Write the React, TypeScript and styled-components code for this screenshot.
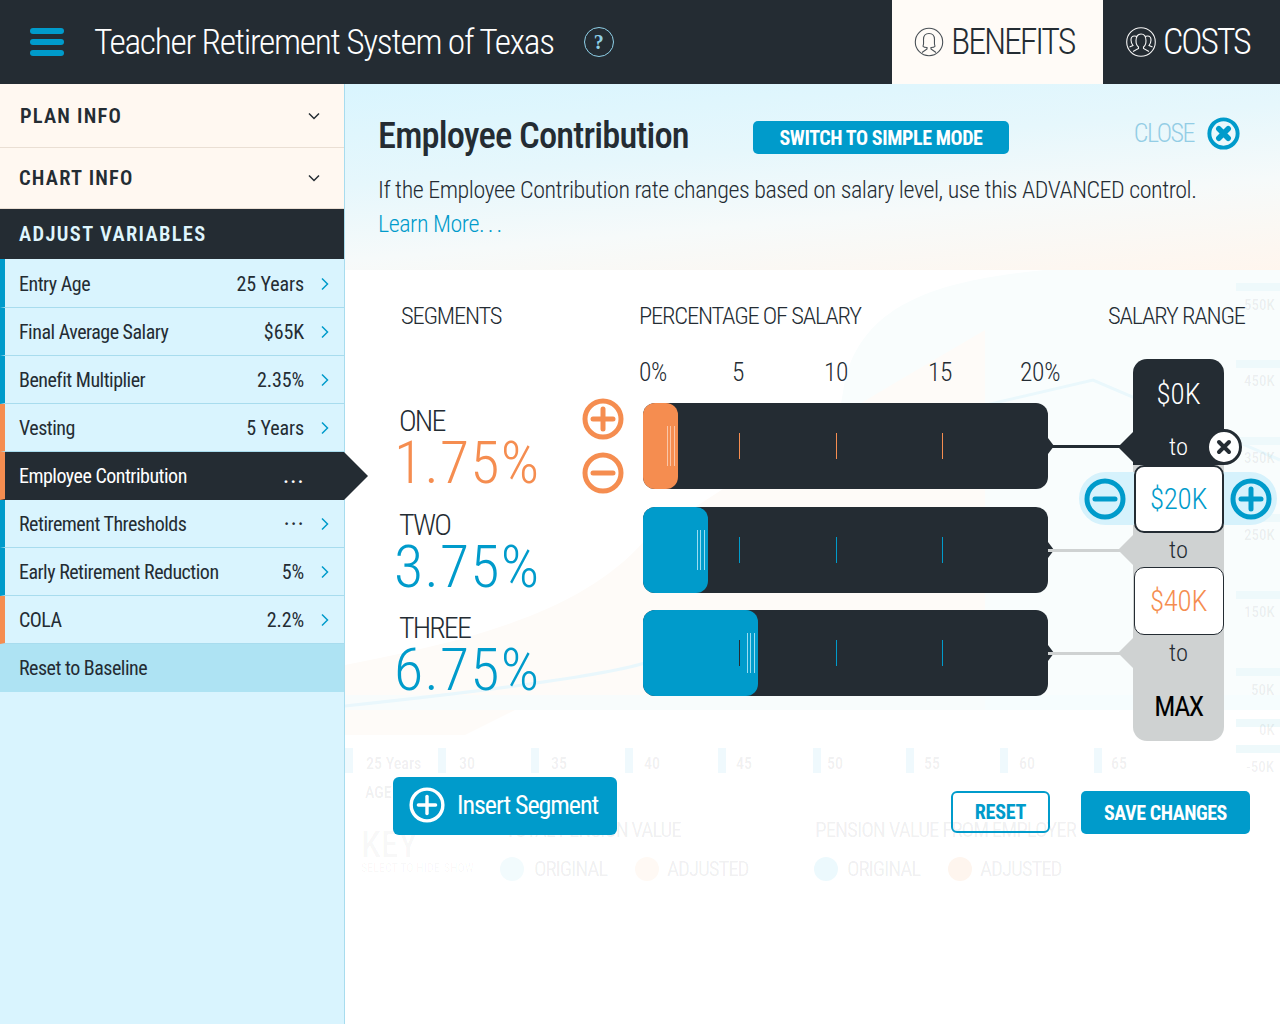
import React from "react";
import styled, { createGlobalStyle, css } from "styled-components";

const DARK = "#242c33";
const BLUE = "#009bcb";
const ORANGE = "#f58d50";
const SKY = "#d9f4fe";
const CREAM = "#fff8f1";
const LINE = "#a8dcee";
const GREY = "#cfd2d2";

const cond = css`
  font-family: "Roboto", "Liberation Sans", sans-serif;
  font-stretch: 75%;
  white-space: nowrap;
`;

const Global = createGlobalStyle`
  html, body { margin: 0; padding: 0; background: #fff; }
  * { box-sizing: border-box; }
`;

const Page = styled.div`
  width: 1280px;
  height: 1024px;
  overflow: hidden;
  display: flex;
  flex-direction: column;
  ${cond}
`;

/* ---------- top bar ---------- */
const TopBar = styled.header`
  height: 84px;
  flex: none;
  background: ${DARK};
  display: flex;
  align-items: center;
  padding-left: 30px;
`;
const Burger = styled.div`
  width: 34px;
  display: flex;
  flex-direction: column;
  gap: 5px;
  margin-right: 30px;
`;
const BurgerBar = styled.span`
  height: 6px;
  border-radius: 3px;
  background: ${BLUE};
`;
const AppTitle = styled.h1`
  margin: 0;
  font-size: 35.5px;
  font-weight: 300;
  letter-spacing: -1.3px;
  color: #fff;
`;
const HelpBadge = styled.span`
  width: 30px;
  height: 30px;
  margin-left: 30px;
  border-radius: 50%;
  border: 1.5px solid #8fd0e8;
  color: #8fd0e8;
  display: flex;
  align-items: center;
  justify-content: center;
  font-family: "Liberation Serif", serif;
  font-weight: 700;
  font-size: 20px;
`;
const Tabs = styled.nav`
  margin-left: auto;
  display: flex;
  align-self: stretch;
`;
const Tab = styled.div<{ $active?: boolean; $w: number; $pad: number }>`
  width: ${(p) => p.$w}px;
  padding-left: ${(p) => p.$pad}px;
  display: flex;
  align-items: center;
  gap: 7px;
  background: ${(p) => (p.$active ? "#fffbf7" : DARK)};
  color: ${(p) => (p.$active ? DARK : "#fff")};
  font-size: 36px;
  font-weight: 300;
  letter-spacing: -2.15px;
`;

/* ---------- layout ---------- */
const Body = styled.div`
  flex: 1;
  display: flex;
  min-height: 0;
`;
const Sidebar = styled.aside`
  position: relative;
  z-index: 2;
  width: 345px;
  flex: none;
  background: ${SKY};
  border-right: 1px solid ${LINE};
`;
const Accordion = styled.div<{ $h: number; $pad: number }>`
  height: ${(p) => p.$h}px;
  padding: 0 23px 0 ${(p) => p.$pad}px;
  background: ${CREAM};
  border-bottom: 1px solid #eadfd4;
  display: flex;
  align-items: center;
  justify-content: space-between;
  color: ${DARK};
  font-size: 20.5px;
  font-weight: 600;
  letter-spacing: 1.2px;
`;
const SectionHead = styled.div`
  height: 50px;
  background: ${DARK};
  color: #dff5fd;
  padding-left: 19px;
  display: flex;
  align-items: center;
  font-size: 20.5px;
  font-weight: 600;
  letter-spacing: 1.35px;
`;
const Row = styled.div<{ $strip: string; $active?: boolean }>`
  position: relative;
  height: 48px;
  display: flex;
  align-items: center;
  padding: 0 12px 0 14px;
  border-left: 5px solid ${(p) => p.$strip};
  border-bottom: 1px solid ${(p) => (p.$active ? DARK : LINE)};
  background: ${(p) => (p.$active ? DARK : "transparent")};
  color: ${(p) => (p.$active ? "#fff" : DARK)};
  font-size: 20px;
  font-weight: 400;
  letter-spacing: -0.5px;
  ${SectionHead} + & {
    height: 49px;
    padding-top: 1px;
  }
  ${(p) =>
    p.$active &&
    css`
      &::after {
        content: "";
        position: absolute;
        left: 339px;
        top: 0;
        width: 24px;
        height: 48px;
        background: ${DARK};
        clip-path: polygon(0 0, 100% 50%, 0 100%);
      }
    `}
`;
const RowValue = styled.span`
  margin-left: auto;
  font-weight: 400;
  letter-spacing: -0.1px;
`;
const RowDots = styled.span`
  margin-left: auto;
  font-size: 20px;
  font-weight: 500;
  letter-spacing: 1.7px;
  margin-right: -1px;
`;
const RowChevron = styled.span`
  width: 14px;
  margin-left: 14px;
  display: flex;
  color: ${BLUE};
`;
const ResetRow = styled.div`
  height: 49px;
  margin-top: -1px;
  background: #aee3f3;
  color: ${DARK};
  padding-left: 19px;
  display: flex;
  align-items: center;
  font-size: 20px;
  letter-spacing: -0.5px;
`;

const Main = styled.main`
  position: relative;
  flex: 1;
  min-width: 0;
  background: #fff;
`;

/* ---------- ghost chart that sits behind the overlay ---------- */
const Ghost = styled.div`
  position: absolute;
  inset: 0;
`;
const GhostArt = styled.svg`
  position: absolute;
  left: 0;
  top: 186px;
`;
const GhostLabel = styled.span<{ $x: number; $y: number; $size?: number; $weight?: number; $o?: number; $ls?: number }>`
  position: absolute;
  left: ${(p) => p.$x - 345}px;
  top: ${(p) => p.$y - 84}px;
  transform: translateY(-50%);
  font-size: ${(p) => p.$size || 16}px;
  font-weight: ${(p) => p.$weight || 500};
  letter-spacing: ${(p) => p.$ls || 0}px;
  color: rgba(36, 44, 51, ${(p) => p.$o || 0.09});
`;
const GhostDot = styled.span<{ $x: number; $c: string }>`
  position: absolute;
  left: ${(p) => p.$x - 345}px;
  top: 773px;
  width: 24px;
  height: 24px;
  border-radius: 50%;
  background: ${(p) => p.$c};
`;

/* ---------- intro ---------- */
const Intro = styled.section`
  position: relative;
  height: 186px;
  padding: 33px 0 0 33px;
  background: linear-gradient(175deg, #d9f5fe 0%, #e6f7fc 38%, #f6fafa 66%, #fff6ee 100%);
`;
const IntroTop = styled.div`
  display: flex;
  align-items: center;
  height: 38px;
`;
const IntroTitle = styled.h2`
  margin: -2px 0 0;
  width: 375px;
  font-size: 36.5px;
  font-weight: 500;
  letter-spacing: -0.85px;
  color: ${DARK};
`;
const ModeButton = styled.button`
  ${cond}
  width: 256px;
  height: 33px;
  margin-top: 3px;
  border: 0;
  border-radius: 5px;
  background: ${BLUE};
  color: #fff;
  font-size: 20px;
  font-weight: 700;
  letter-spacing: -0.4px;
  padding: 0;
`;
const CloseWrap = styled.div`
  margin: -6px 40px 0 auto;
  display: flex;
  align-items: center;
  gap: 13px;
  color: #93cde5;
  font-size: 26px;
  font-weight: 300;
  letter-spacing: -1.5px;
`;
const IntroText = styled.p<{ $blue?: boolean }>`
  margin: ${(p) => (p.$blue ? "6px" : "21px")} 0 0;
  font-size: 24px;
  font-weight: 300;
  line-height: 28px;
  letter-spacing: -0.45px;
  color: ${(p) => (p.$blue ? BLUE : DARK)};
`;
const WideDots = styled.span`
  letter-spacing: 3px;
`;

/* ---------- editor grid ---------- */
const Editor = styled.section`
  position: relative;
  display: grid;
  grid-template-columns: 186px 61px 405px 85px 91px;
  grid-template-rows: 56px 44px 104px 103px 131px;
  padding: 33px 0 0 51px;
`;
const ColumnHead = styled.div<{ $col: string; $off: number }>`
  grid-column: ${(p) => p.$col};
  grid-row: 1;
  margin: -1px 0 0 ${(p) => p.$off}px;
  font-size: 24.5px;
  font-weight: 300;
  letter-spacing: -1.2px;
  color: ${DARK};
  line-height: 27px;
`;
const Scale = styled.div`
  grid-column: 3 / 5;
  grid-row: 2;
  position: relative;
  font-size: 25.5px;
  font-weight: 300;
  letter-spacing: -0.3px;
  color: ${DARK};
`;
const ScaleMark = styled.span<{ $x: number }>`
  position: absolute;
  left: ${(p) => p.$x}px;
  top: 0;
  line-height: 26px;
  margin-left: -4px;
`;
const SegmentLabel = styled.div<{ $row: number }>`
  grid-column: 1;
  grid-row: ${(p) => p.$row};
  display: flex;
  flex-direction: column;
  padding-left: 3px;
`;
const SegName = styled.span`
  font-size: 30px;
  font-weight: 300;
  line-height: 34px;
  margin-top: 1px;
  letter-spacing: -1.9px;
  color: ${DARK};
`;
const SegValue = styled.span<{ $c: string }>`
  font-size: 60px;
  font-weight: 300;
  line-height: 48px;
  margin: 1px 0 0 -5px;
  letter-spacing: 1.2px;
  color: ${(p) => p.$c};
`;
const SegActions = styled.div`
  grid-column: 2;
  grid-row: 3;
  display: flex;
  flex-direction: column;
  gap: 12px;
  margin-top: -5px;
`;
const BarCell = styled.div<{ $row: number }>`
  grid-column: 3;
  grid-row: ${(p) => p.$row};
  position: relative;
  height: 86px;
  background: ${DARK};
  border-radius: 12px;
`;
const BarFill = styled.div<{ $w: number; $c: string }>`
  position: absolute;
  left: 0;
  top: 0;
  bottom: 0;
  width: ${(p) => p.$w}px;
  background: ${(p) => p.$c};
  border-radius: 12px;
`;
const Grip = styled.div<{ $c: string }>`
  position: absolute;
  right: 3px;
  top: 23px;
  width: 8px;
  height: 40px;
  border-left: 1px solid ${(p) => p.$c};
  border-right: 1px solid ${(p) => p.$c};
  &::after {
    content: "";
    position: absolute;
    left: 2px;
    top: 0;
    height: 40px;
    width: 1px;
    background: ${(p) => p.$c};
  }
`;
const Tick = styled.span<{ $x: number; $c: string }>`
  position: absolute;
  left: ${(p) => p.$x}px;
  top: 30px;
  width: 1px;
  height: 26px;
  background: ${(p) => p.$c};
`;
const BarNotch = styled.span`
  position: absolute;
  left: 100%;
  top: 35px;
  width: 6px;
  height: 16px;
  background: ${DARK};
  clip-path: polygon(0 0, 100% 50%, 0 100%);
`;
const Connector = styled.span<{ $c: string }>`
  position: absolute;
  left: 100%;
  top: 42px;
  width: 72px;
  height: 3px;
  background: ${(p) => p.$c};
`;

/* ---------- salary range ---------- */
const RangeCol = styled.div`
  grid-column: 5;
  grid-row: 2 / 6;
  position: relative;
  display: flex;
  flex-direction: column;
  align-items: center;
  border-radius: 14px;
  background: linear-gradient(${DARK} 0, ${DARK} 106px, ${GREY} 106px, ${GREY} 100%);
`;
const RangeValue = styled.div<{ $h: number; $c: string; $w?: number; $fs?: number; $ls?: number }>`
  height: ${(p) => p.$h}px;
  display: flex;
  align-items: center;
  justify-content: center;
  font-size: ${(p) => p.$fs || 29}px;
  font-weight: ${(p) => p.$w || 300};
  letter-spacing: ${(p) => p.$ls || 0}px;
  color: ${(p) => p.$c};
`;
const RangeTo = styled.div<{ $h: number; $c: string; $point: string }>`
  position: relative;
  width: 100%;
  height: ${(p) => p.$h}px;
  padding-bottom: 2px;
  display: flex;
  align-items: center;
  justify-content: center;
  font-size: 24.5px;
  font-weight: 300;
  color: ${(p) => p.$c};
  &::before {
    content: "";
    position: absolute;
    right: 100%;
    top: 50%;
    margin-top: -15px;
    width: 15px;
    height: 30px;
    background: ${(p) => p.$point};
    clip-path: polygon(100% 0, 100% 100%, 0 50%);
  }
`;
const RangeBox = styled.div<{ $c: string; $active?: boolean }>`
  position: relative;
  z-index: 1;
  width: 90px;
  height: 68px;
  border-radius: 10px;
  background: #fff;
  border: ${(p) => (p.$active ? 2 : 1)}px solid ${DARK};
  display: flex;
  align-items: center;
  justify-content: center;
  font-size: 29px;
  font-weight: 300;
  letter-spacing: -0.3px;
  color: ${(p) => p.$c};
`;
const RangeSpread = styled.div`
  position: absolute;
  top: 7px;
  left: -54px;
  width: 198px;
  height: 53px;
  border-radius: 27px;
  background: #d6f2fc;
  display: flex;
  align-items: center;
  justify-content: space-between;
  padding: 0 5px;
`;
const RangeStack = styled.div`
  position: relative;
  width: 100%;
  flex: 1;
  display: flex;
  flex-direction: column;
  align-items: center;
`;
const RemoveBadge = styled.span`
  position: absolute;
  left: 73px;
  top: 70px;
  width: 36px;
  height: 36px;
  border-radius: 50%;
  background: #fff;
  border: 3px solid ${DARK};
  display: flex;
  align-items: center;
  justify-content: center;
  z-index: 2;
`;

/* ---------- footer ---------- */
const Footer = styled.div`
  position: relative;
  display: flex;
  align-items: flex-start;
  padding: 36px 30px 0 48px;
`;
const InsertButton = styled.button`
  ${cond}
  width: 224px;
  height: 58px;
  padding: 0 0 2px 16px;
  border: 0;
  border-radius: 6px;
  background: ${BLUE};
  color: #fff;
  display: flex;
  align-items: center;
  gap: 12px;
  font-size: 26px;
  font-weight: 400;
  letter-spacing: -1.05px;
`;
const GhostButton = styled.button`
  ${cond}
  margin: 14px 0 0 auto;
  width: 99px;
  height: 42px;
  padding: 0;
  background: transparent;
  border: 2px solid ${BLUE};
  border-radius: 6px;
  color: ${BLUE};
  font-size: 20px;
  font-weight: 700;
  letter-spacing: -0.2px;
`;
const SaveButton = styled.button`
  ${cond}
  margin: 14px 0 0 31px;
  width: 169px;
  height: 43px;
  padding: 0;
  border: 0;
  border-radius: 5px;
  background: ${BLUE};
  color: #fff;
  font-size: 20px;
  font-weight: 700;
  letter-spacing: -0.45px;
`;

/* ---------- icons ---------- */
const Chevron = ({ dir, size = 14 }: { dir: "r" | "d"; size?: number }) => (
  <svg width={size} height={size} viewBox="0 0 14 14" fill="none" stroke="currentColor" strokeWidth="1.5">
    {dir === "r" ? <path d="M4 1.5 9.5 7 4 12.5" /> : <path d="M2 4.5 7 9.5 12 4.5" />}
  </svg>
);

const RoundIcon = ({ kind, color, size, sw = 5 }: { kind: "plus" | "minus" | "x"; color: string; size: number; sw?: number }) => (
  <svg width={size} height={size} viewBox="0 0 42 42" fill="none" stroke={color} strokeLinecap="round">
    <circle cx="21" cy="21" r={21 - sw / 2 - 0.5} strokeWidth={sw} />
    {kind !== "x" && <path d="M11 21H31" strokeWidth={sw} />}
    {kind === "plus" && <path d="M21 11V31" strokeWidth={sw} />}
    {kind === "x" && <path d="M15 15 27 27M27 15 15 27" strokeWidth={sw + 2} />}
  </svg>
);

const PersonIcon = () => (
  <svg width="30" height="30" viewBox="0 0 30 30" fill="none" stroke="#4a5157" strokeWidth="1.1">
    <circle cx="15" cy="15" r="13.7" />
    <path d="M8 25.5 13 22V20.5C10.5 20.5 9.5 20 9 19.2 10 17.5 9.5 14 9.5 12.5 9.5 8.5 12 6.5 15 6.5S20.5 8.5 20.5 12.5C20.5 14 20 17.5 21 19.2 20.5 20 19.5 20.5 17 20.5V22L22 25.5" />
  </svg>
);

const GroupIcon = () => (
  <svg width="30" height="30" viewBox="0 0 30 30" fill="none" stroke="#f4f4f4" strokeWidth="1.1">
    <circle cx="15" cy="15" r="14.3" />
    <path d="M3.5 20 7 18.5C5.5 16.5 5 15 5 13 5 10.5 6.5 9 8.500 9 9.700 9 10.500 9.500 11 10.200" />
    <path d="M26.5 20 23 18.5C24.5 16.5 25 15 25 13 25 10.5 23.500 9 21.500 9 20.300 9 19.500 9.500 19 10.200" />
    <path d="M7 24.500 12.500 21.500V20C11 19 10 16.500 10 13.500 10 9.500 12 7 15 7S20 9.500 20 13.500C20 16.500 19 19 17.500 20V21.500L23 24.500" />
  </svg>
);

const rows = [
  { label: "Entry Age", value: "25 Years", strip: BLUE },
  { label: "Final Average Salary", value: "$65K", strip: BLUE },
  { label: "Benefit Multiplier", value: "2.35%", strip: BLUE },
  { label: "Vesting", value: "5 Years", strip: ORANGE },
  { label: "Employee Contribution", dots: "...", strip: ORANGE, active: true },
  { label: "Retirement Thresholds", dots: "···", strip: BLUE },
  { label: "Early Retirement Reduction", value: "5%", strip: BLUE },
  { label: "COLA", value: "2.2%", strip: ORANGE },
];

const bars = [
  { row: 3, name: "ONE", value: "1.75%", color: ORANGE, fill: 35, grip: "rgba(255,255,255,.5)", ticks: [{ x: 96, c: ORANGE }, { x: 193, c: ORANGE }, { x: 299, c: ORANGE }], line: DARK },
  { row: 4, name: "TWO", value: "3.75%", color: BLUE, fill: 65, grip: "#9adcf2", ticks: [{ x: 96, c: BLUE }, { x: 193, c: BLUE }, { x: 299, c: BLUE }], line: GREY },
  { row: 5, name: "THREE", value: "6.75%", color: BLUE, fill: 115, grip: "#9adcf2", ticks: [{ x: 193, c: BLUE }, { x: 299, c: BLUE }], line: GREY },
];

const yLabels: [string, number, number][] = [
  ["550K", 1244, 305], ["450K", 1244, 381], ["350K", 1244, 458], ["250K", 1244, 535],
  ["150K", 1244, 612], ["50K", 1251, 690], ["0K", 1259, 730], ["-50K", 1246, 767],
];
const xLabels: [string, number][] = [
  ["25 Years", 366], ["30", 459], ["35", 551], ["40", 644], ["45", 736], ["50", 827], ["55", 924], ["60", 1019], ["65", 1111],
];
const xBars = [0, 93, 186, 280, 373, 468, 561, 655, 749];
const yBands = [13, 90, 167, 244, 321, 398, 449, 475];

export default function App() {
  return (
    <Page>
      <Global />
      <TopBar>
        <Burger>
          <BurgerBar />
          <BurgerBar />
          <BurgerBar />
        </Burger>
        <AppTitle>Teacher Retirement System of Texas</AppTitle>
        <HelpBadge>?</HelpBadge>
        <Tabs>
          <Tab $active $w={211} $pad={22}>
            <PersonIcon />
            BENEFITS
          </Tab>
          <Tab $w={177} $pad={23}>
            <GroupIcon />
            COSTS
          </Tab>
        </Tabs>
      </TopBar>
      <Body>
        <Sidebar>
          <Accordion $h={64} $pad={20}>
            PLAN INFO
            <Chevron dir="d" />
          </Accordion>
          <Accordion $h={61} $pad={19}>
            CHART INFO
            <Chevron dir="d" />
          </Accordion>
          <SectionHead>ADJUST VARIABLES</SectionHead>
          {rows.map((r) => (
            <Row key={r.label} $strip={r.strip} $active={r.active}>
              {r.label}
              {r.dots ? <RowDots>{r.dots}</RowDots> : <RowValue>{r.value}</RowValue>}
              <RowChevron>{!r.active && <Chevron dir="r" />}</RowChevron>
            </Row>
          ))}
          <ResetRow>Reset to Baseline</ResetRow>
        </Sidebar>
        <Main>
          <Ghost>
            <GhostArt width="935" height="530" viewBox="0 0 935 530" fill="none">
              <path d="M300 440C420 400 480 240 500 110 520 30 600 10 700 0H935V440Z" fill="#f9fdfd" />
              <path d="M0 395C130 370 240 340 300 270 420 190 520 130 640 60V440H170L120 465H0Z" fill="#fefbf8" />
              <path d="M0 425H935V440H0Z" fill="#f5fcfd" opacity=".7" />
              <path d="M0 436C150 420 260 405 300 393" stroke="#e9f7fc" strokeWidth="3" />
              <path d="M620 140 748 110 935 190" stroke="#eaf8fc" strokeWidth="3" />
              {xBars.map((x) => (
                <rect key={x} x={x} y="478" width="8" height="25" fill="#eff9fd" />
              ))}
              {yBands.map((y) => (
                <rect key={y} x="891" y={y} width="44" height="8" fill="#eef9fb" />
              ))}
            </GhostArt>
            {yLabels.map(([t, x, y]) => (
              <GhostLabel key={t} $x={x} $y={y} $size={15} $o={0.07}>
                {t}
              </GhostLabel>
            ))}
            {xLabels.map(([t, x]) => (
              <GhostLabel key={t} $x={x} $y={763} $size={16} $o={0.08}>
                {t}
              </GhostLabel>
            ))}
            <GhostLabel $x={365} $y={792} $size={16} $o={0.08}>AGE</GhostLabel>
            <GhostLabel $x={361} $y={845} $size={36} $o={0.03}>KEY</GhostLabel>
            <GhostLabel $x={361} $y={868} $size={12} $o={0.03}>SELECT TO HIDE/SHOW</GhostLabel>
            <GhostLabel $x={505} $y={830} $size={21} $weight={400} $o={0.08} $ls={-1.1}>TOTAL PENSION VALUE</GhostLabel>
            <GhostLabel $x={815} $y={830} $size={21} $weight={400} $o={0.08} $ls={-1}>PENSION VALUE FROM EMPLOYER</GhostLabel>
            <GhostLabel $x={534} $y={869} $size={21} $weight={400} $o={0.08} $ls={-1.1}>ORIGINAL</GhostLabel>
            <GhostLabel $x={667} $y={869} $size={21} $weight={400} $o={0.08} $ls={-1.1}>ADJUSTED</GhostLabel>
            <GhostLabel $x={847} $y={869} $size={21} $weight={400} $o={0.08} $ls={-1.1}>ORIGINAL</GhostLabel>
            <GhostLabel $x={980} $y={869} $size={21} $weight={400} $o={0.08} $ls={-1.1}>ADJUSTED</GhostLabel>
            <GhostDot $x={500} $c="#f2fbfd" />
            <GhostDot $x={635} $c="#fff9f4" />
            <GhostDot $x={814} $c="#ecf9fd" />
            <GhostDot $x={948} $c="#fef5ee" />
          </Ghost>
          <Intro>
            <IntroTop>
              <IntroTitle>Employee Contribution</IntroTitle>
              <ModeButton>SWITCH TO SIMPLE MODE</ModeButton>
              <CloseWrap>
                CLOSE
                <RoundIcon kind="x" color={BLUE} size={33} sw={5} />
              </CloseWrap>
            </IntroTop>
            <IntroText>If the Employee Contribution rate changes based on salary level, use this ADVANCED control.</IntroText>
            <IntroText $blue>
              Learn More<WideDots>...</WideDots>
            </IntroText>
          </Intro>
          <Editor>
            <ColumnHead $col="1" $off={5}>SEGMENTS</ColumnHead>
            <ColumnHead $col="3" $off={-4}>PERCENTAGE OF SALARY</ColumnHead>
            <ColumnHead $col="4 / 7" $off={60}>SALARY RANGE</ColumnHead>
            <Scale>
              <ScaleMark $x={0}>0%</ScaleMark>
              <ScaleMark $x={93}>5</ScaleMark>
              <ScaleMark $x={185}>10</ScaleMark>
              <ScaleMark $x={289}>15</ScaleMark>
              <ScaleMark $x={381}>20%</ScaleMark>
            </Scale>
            {bars.map((b) => (
              <SegmentLabel key={b.name} $row={b.row}>
                <SegName>{b.name}</SegName>
                <SegValue $c={b.color}>{b.value}</SegValue>
              </SegmentLabel>
            ))}
            <SegActions>
              <RoundIcon kind="plus" color={ORANGE} size={42} />
              <RoundIcon kind="minus" color={ORANGE} size={42} />
            </SegActions>
            {bars.map((b) => (
              <BarCell key={b.name} $row={b.row}>
                {b.ticks.map((t) => (
                  <Tick key={t.x} $x={t.x} $c={t.c} />
                ))}
                <BarFill $w={b.fill} $c={b.color}>
                  <Grip $c={b.grip} />
                </BarFill>
                {b.row === 5 && <Tick $x={96} $c={DARK} />}
                <BarNotch />
                <Connector $c={b.line} />
              </BarCell>
            ))}
            <RangeCol>
              <RangeValue $h={70} $c="#fff">$0K</RangeValue>
              <RangeTo $h={36} $c="#fff" $point={DARK}>to</RangeTo>
              <RangeStack>
                <RangeSpread>
                  <RoundIcon kind="minus" color={BLUE} size={42} />
                  <RoundIcon kind="plus" color={BLUE} size={42} />
                </RangeSpread>
                <RangeBox $c={BLUE} $active>$20K</RangeBox>
                <RangeTo $h={34} $c={DARK} $point={GREY}>to</RangeTo>
                <RangeBox $c={ORANGE}>$40K</RangeBox>
                <RangeTo $h={36} $c={DARK} $point={GREY}>to</RangeTo>
                <RangeValue $h={70} $c="#000" $w={400} $fs={28} $ls={-1.5}>MAX</RangeValue>
              </RangeStack>
              <RemoveBadge>
                <svg width="18" height="18" viewBox="0 0 18 18" stroke={DARK} strokeWidth="4" strokeLinecap="round">
                  <path d="M4 4 14 14M14 4 4 14" />
                </svg>
              </RemoveBadge>
            </RangeCol>
          </Editor>
          <Footer>
            <InsertButton>
              <RoundIcon kind="plus" color="#fff" size={36} sw={4} />
              Insert Segment
            </InsertButton>
            <GhostButton>RESET</GhostButton>
            <SaveButton>SAVE CHANGES</SaveButton>
          </Footer>
        </Main>
      </Body>
    </Page>
  );
}
